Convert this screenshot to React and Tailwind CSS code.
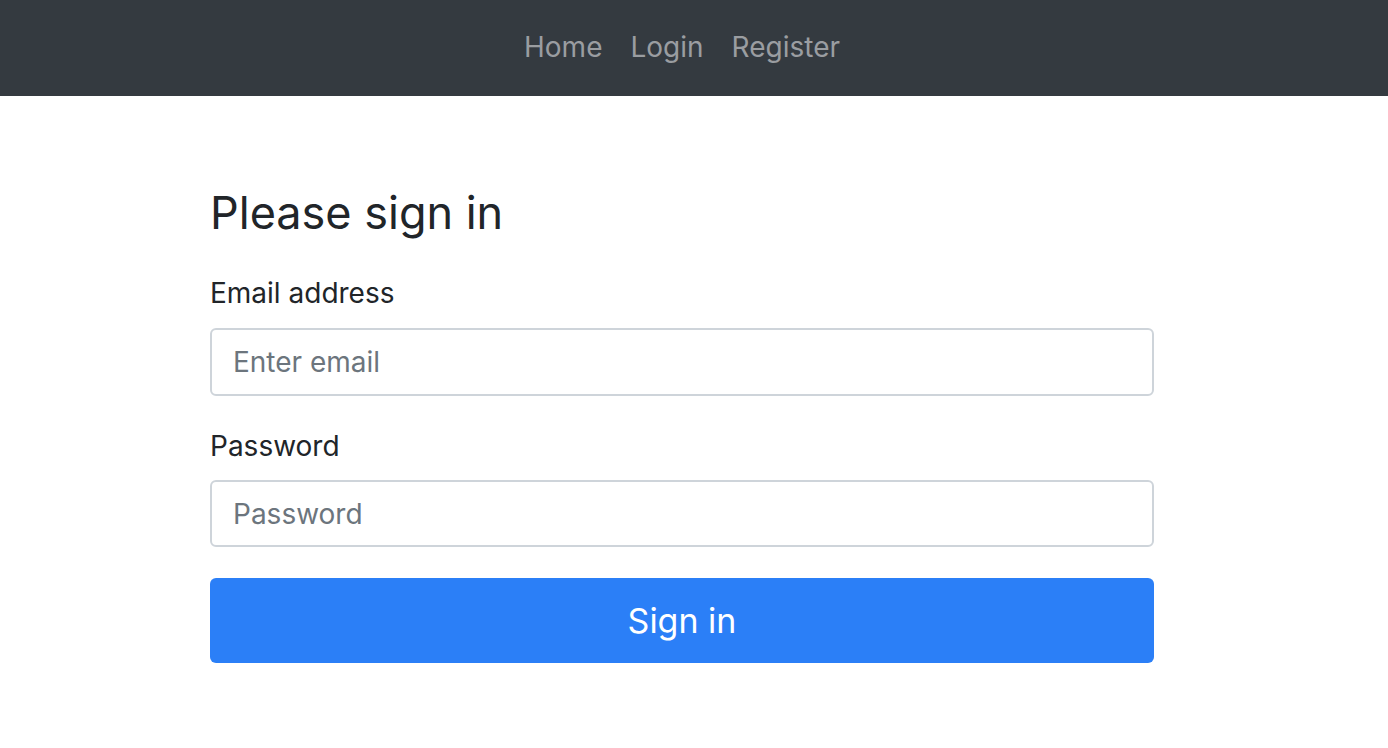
export default function App() {
  return (
    <div className="min-h-screen bg-white" style={{ fontFamily: "Inter, 'Noto Sans', sans-serif" }}>
      <nav className="h-[96px] bg-[#343a40] flex items-center">
        <div className="ml-[510px] flex -mt-[2px]">
          <a className="px-[14px] text-[28px] text-[#9a9da1] leading-[40px]">Home</a>
          <a className="px-[14px] text-[28px] text-[#9a9da1] leading-[40px]">Login</a>
          <a className="px-[14px] text-[28px] text-[#9a9da1] leading-[40px]">Register</a>
        </div>
      </nav>
      <div className="ml-[210px] w-[944px] pt-[88px]">
        <h3 className="text-[45px] leading-[58px] text-[#212529] font-normal">Please sign in</h3>
        <div className="mt-[31px]">
          <label className="block text-[28px] leading-[40px] text-[#212529]">Email address</label>
          <input
            className="mt-[15px] block w-full h-[68px] border-2 border-[#ced4da] rounded-[6px] px-[21px] text-[28px] text-[#495057] placeholder:text-[#6c757d] outline-none"
            placeholder="Enter email"
          />
        </div>
        <div className="mt-[30px]">
          <label className="block text-[28px] leading-[40px] text-[#212529]">Password</label>
          <input
            type="password"
            className="mt-[14px] block w-full h-[67px] border-2 border-[#ced4da] rounded-[6px] px-[21px] text-[28px] text-[#495057] placeholder:text-[#6c757d] outline-none"
            placeholder="Password"
          />
        </div>
        <button className="mt-[31px] block w-full h-[85px] bg-[#2b7ff7] rounded-[6px] text-white text-[34px]">
          Sign in
        </button>
      </div>
    </div>
  );
}
